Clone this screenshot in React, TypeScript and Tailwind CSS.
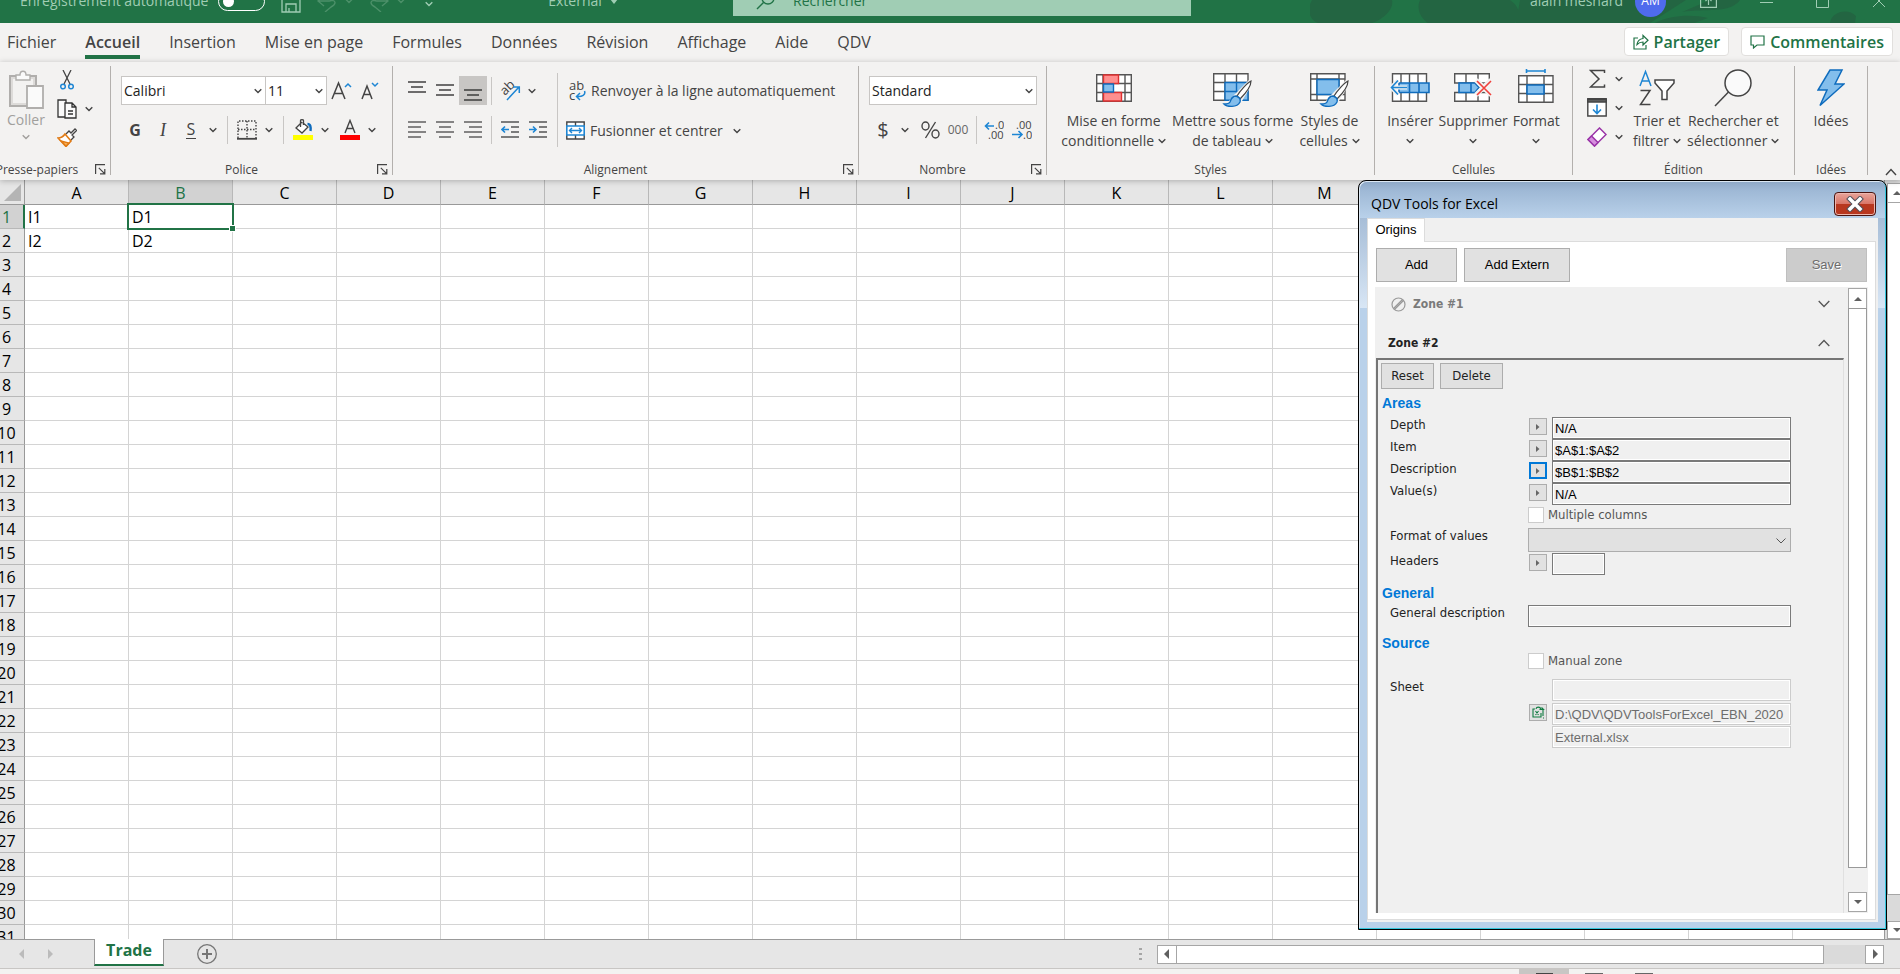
import React, { useState } from "react";
import clsx from "clsx";

const columns = "ABCDEFGHIJKLMNOPQR".split("");
const rows = Array.from({ length: 31 }, (_, i) => i + 1);
const cells: Record<string, string> = { A1: "I1", B1: "D1", A2: "I2", B2: "D2" };

const tabs = [
  "Fichier",
  "Accueil",
  "Insertion",
  "Mise en page",
  "Formules",
  "Données",
  "Révision",
  "Affichage",
  "Aide",
  "QDV",
];

/* ---------- small pieces ---------- */

const Chevron = ({ className = "" }: { className?: string }) => (
  <svg
    width="8"
    height="6"
    viewBox="0 0 8 6"
    fill="none"
    stroke="currentColor"
    strokeWidth="1.4"
    className={clsx("inline-block shrink-0", className)}
  >
    <path d="M0.7 1.2 4 4.5 7.3 1.2" />
  </svg>
);

const Drop = ({ label }: { label: string }) => (
  <button aria-label={label} className="flex h-7 w-4 items-center justify-center">
    <Chevron />
  </button>
);

const Tool = ({
  label,
  active,
  children,
}: {
  label: string;
  active?: boolean;
  children: React.ReactNode;
}) => (
  <button
    aria-label={label}
    className={clsx("flex h-[29px] w-7 shrink-0 items-center justify-center", active && "bg-[#c8c6c4]")}
  >
    {children}
  </button>
);

const Sep = () => <div className="mr-[5px] ml-[6px] h-7 w-px shrink-0 bg-[#c8c6c4]" />;

const Lines = ({ rows, dark }: { rows: number[][]; dark?: boolean }) => (
  <svg width="18" height="20" viewBox="0 0 18 20" stroke={dark ? "#333" : "#555"} strokeWidth="1.4">
    {rows.map(([x1, x2, y]) => (
      <path key={y} d={`M${x1} ${y}H${x2}`} />
    ))}
  </svg>
);

const Group = ({
  name,
  launcher,
  className,
  children,
}: {
  name: string;
  launcher?: boolean;
  className: string;
  children: React.ReactNode;
}) => (
  <section className={clsx("flex h-[109px] shrink-0 flex-col border-r border-[#b3b0ad]", className)}>
    <div className="flex flex-1">{children}</div>
    <div className="flex h-[18px] items-end">
      <h3 className="flex-1 text-center text-xs leading-[10px] whitespace-nowrap">{name}</h3>
      {launcher && (
        <button aria-label={`Options ${name}`} className="mr-1 flex w-4 justify-end">
          <svg width="11" height="11" viewBox="0 0 11 11" fill="none" stroke="#444" strokeWidth="1.2">
            <path d="M10 .6H.6V10M3.8 3.8 9.6 9.6M9.8 5v4.8H5" />
          </svg>
        </button>
      )}
    </div>
  </section>
);

const Combo = ({ label, value, className }: { label: string; value: string; className: string }) => (
  <div className={clsx("relative h-[29px] shrink-0", className)}>
    <select
      aria-label={label}
      className="h-full w-full appearance-none border border-[#c8c6c4] bg-white pl-[2px] text-sm text-[#222]"
    >
      <option>{value}</option>
    </select>
    <Chevron className="pointer-events-none absolute top-3 right-1" />
  </div>
);

const BigButton = ({
  icon,
  lines,
  className,
}: {
  icon: React.ReactNode;
  lines: string[];
  className?: string;
}) => (
  <button className={clsx("flex shrink-0 flex-col items-center text-sm leading-[20px] whitespace-nowrap", className)}>
    <span className="flex h-[45px] items-center pb-[2px]">{icon}</span>
    <span>{lines[0]}</span>
    {lines.length > 1 && (
      <span className="flex h-5 items-center gap-1">
        {lines[1]}
        <Chevron className={lines[1] ? "" : "mb-px"} />
      </span>
    )}
  </button>
);

/* ---------- title bar ---------- */

const TitleBar = () => {
  const [autosave, setAutosave] = useState(false);
  return (
    <header className="relative h-[23px] shrink-0 overflow-hidden bg-[#217346] text-[#a0cdb4]">
      <svg className="absolute top-0 right-0" width="590" height="23" fill="#236542">
        <path d="M2 0C-4 10 0 20 8 23H62C76 18 84 8 82 0ZM110 0C104 14 118 23 118 23H205C214 14 206 4 200 0ZM206 23H340L376 0H210ZM345 23C360 15 382 14 398 18L384 23ZM520 23C522 11 538 8 546 16L545 23ZM400 0 372 12C395 8 420 14 430 0Z" />
      </svg>
      <div className="relative -mt-[21px] flex h-11 items-center text-sm whitespace-nowrap">
        <label className="flex w-[265px] items-center justify-between pl-5">
          Enregistrement automatique
          <input
            type="checkbox"
            checked={autosave}
            onChange={() => setAutosave(!autosave)}
            className="peer sr-only"
          />
          <span className="flex h-[19px] w-[47px] items-center rounded-full border border-white px-1">
            <span className="h-[11px] w-[11px] rounded-full bg-white" />
          </span>
        </label>
        <div className="flex w-[468px] items-center pl-4">
          <button aria-label="Enregistrer">
            <svg width="20" height="24" viewBox="0 0 20 24" fill="none" stroke="currentColor" strokeWidth="1.3">
              <path d="M1 3H16L19 6V23H1ZM5 23V15H15V23M5 3V9H14V3M8 23V19" />
            </svg>
          </button>
          <button aria-label="Annuler" className="ml-4 flex items-center gap-1 text-[#4c9069]">
            <svg width="20" height="22" viewBox="0 0 20 22" fill="none" stroke="currentColor" strokeWidth="1.4">
              <path d="M7 5 1 11 7 16M1 11H12C19 9 20 14 14 17L8 22" />
            </svg>
            <Chevron className="ml-1" />
          </button>
          <button aria-label="Rétablir" className="ml-4 flex items-center gap-1 text-[#4c9069]">
            <svg width="20" height="22" viewBox="0 0 20 22" fill="none" stroke="currentColor" strokeWidth="1.4">
              <path d="M13 5 19 11 13 16M19 11H8C1 9 0 14 6 17L12 22" />
            </svg>
            <Chevron className="ml-1" />
          </button>
          <button aria-label="Personnaliser" className="ml-5 pt-1">
            <Chevron />
          </button>
          <button className="mx-auto flex items-center gap-2">
            External
            <svg width="8" height="5" fill="currentColor">
              <path d="M0 0H8L4 5Z" />
            </svg>
          </button>
        </div>
        <label className="flex h-[30px] w-[458px] shrink-0 items-center gap-[17px] bg-[#a0cdb4] pl-[23px] text-[#217346]">
          <svg width="20" height="20" viewBox="0 0 20 20" fill="none" stroke="currentColor" strokeWidth="1.4">
            <circle cx="12" cy="7" r="6" />
            <path d="M7.500 11.500 1 18" />
          </svg>
          <input
            type="search"
            aria-label="Rechercher"
            placeholder="Rechercher"
            className="w-80 bg-transparent outline-none placeholder:text-[#217346]"
          />
        </label>
        <div className="flex flex-1 items-center justify-end">
          <span>alain mesnard</span>
          <span className="ml-3 flex h-[31px] w-[31px] items-center justify-center rounded-full bg-[#4f6bed] text-xs text-white">
            AM
          </span>
          <button aria-label="Options du ruban" className="ml-[34px]">
            <svg width="17" height="14" viewBox="0 0 17 14" fill="none" stroke="currentColor" strokeWidth="1.2">
              <path d="M.6.6H16.400V13.400H.6ZM8.500 11V4M5.500 7 8.500 4 11.500 7" />
            </svg>
          </button>
          <button aria-label="Réduire" className="ml-[43px]">
            <svg width="13" height="14" stroke="currentColor">
              <path d="M0 8.500H13" />
            </svg>
          </button>
          <button aria-label="Agrandir" className="ml-[43px]">
            <svg width="13" height="14" fill="none" stroke="currentColor">
              <path d="M.5.5H12.500V13.500H.5Z" />
            </svg>
          </button>
          <button aria-label="Fermer" className="mr-[14px] ml-[43px]">
            <svg width="14" height="14" stroke="currentColor">
              <path d="M1 1 13 13M13 1 1 13" />
            </svg>
          </button>
        </div>
      </div>
    </header>
  );
};

/* ---------- ribbon ---------- */

const TabRow = () => (
  <nav className="flex h-[39px] shrink-0 items-start justify-between pt-1 pr-[7px] pl-[7px]">
    <div className="flex gap-[29px]">
      {tabs.map((tab) => (
        <button
          key={tab}
          className={clsx(
            "flex h-8 items-center border-b-4 pt-px text-base whitespace-nowrap",
            tab === "Accueil" ? "border-[#217346] font-semibold" : "border-transparent"
          )}
        >
          {tab}
        </button>
      ))}
    </div>
    <div className="flex gap-3 font-semibold text-[#217346]">
      <button className="flex h-[29px] items-center gap-[5px] rounded-sm border border-[#e1dfdd] bg-white px-2">
        <svg width="16" height="16" viewBox="0 0 16 16" fill="none" stroke="currentColor" strokeWidth="1.2">
          <path d="M5 4H1V15H13V11M10 1.500V4.500C6 5 4.500 7 4 10.500C6 8.500 8 8 10 8V11L15 6.200Z" />
        </svg>
        Partager
      </button>
      <button className="flex h-[29px] items-center gap-[5px] rounded-sm border border-[#e1dfdd] bg-white px-2">
        <svg width="15" height="14" viewBox="0 0 15 14" fill="none" stroke="currentColor" strokeWidth="1.2">
          <path d="M1 1H14V10H7L3.500 13V10H1Z" />
        </svg>
        Commentaires
      </button>
    </div>
  </nav>
);

const Brush = () => (
  <>
    <path d="M38 9C34 11 27 19 24 24L27 27C32 22 38 14 38 9Z" fill="#fff" stroke="#444" strokeWidth="1.200" />
    <path d="M23 24C19 24 18 27 17 30C16 32 13 32 11 32C14 35 24 36 27 30C28 27 26 25 23 24Z" fill="#83beec" stroke="#0f6cbd" strokeWidth="1.400" />
  </>
);

const Ribbon = () => (
  <div className="z-10 flex h-[118px] shrink-0 overflow-hidden bg-[#f3f2f1] pt-1 text-[#444] shadow-[0_1px_6px_rgba(0,0,0,0.25)]">
    <Group name="Presse-papiers" launcher className="-ml-4 w-[127px]">
      <div className="flex w-[60px] flex-col items-center pt-1 pl-6 text-sm leading-[20px] text-[#a19f9d]">
        <button className="flex flex-col items-center">
          <svg width="36" height="40" viewBox="0 0 36 40" fill="#fafafa" stroke="#b0aeac" strokeWidth="1.400">
            <path d="M2 6H28V36H2Z" fill="#dddbd9" strokeWidth="2" />
            <path d="M5 9H25V33H5Z" stroke="none" fill="#f3f2f1" />
            <path d="M8 10V5H12C12 0 18 0 18 5H22V10Z" />
            <path d="M19 16H35V38H19Z" strokeWidth="1.800" />
          </svg>
          <span>Coller</span>
          <Chevron className="mt-1" />
        </button>
      </div>
      <div className="flex flex-col gap-[9px] pt-1 pl-[13px]">
        <button aria-label="Couper" className="pl-[3px]">
          <svg width="14" height="20" viewBox="0 0 14 20" fill="none" stroke="#444" strokeWidth="1.300">
            <path d="M3 0 10 14M11 0 4 14" />
            <circle cx="3" cy="16.500" r="2.300" stroke="#1e86d4" strokeWidth="1.500" />
            <circle cx="11" cy="16.500" r="2.300" stroke="#1e86d4" strokeWidth="1.500" />
          </svg>
        </button>
        <div className="flex h-5 items-center gap-1">
          <button aria-label="Copier">
            <svg width="20" height="20" viewBox="0 0 20 20" fill="#fafafa" stroke="#333" strokeWidth="1.300">
              <path d="M8 18H1V1H9V4" />
              <path d="M8 4H15L19 8V19H8ZM15 4V8H19M11 12H16M11 15H16" />
            </svg>
          </button>
          <Drop label="Options de copie" />
        </div>
        <button aria-label="Reproduire la mise en forme" className="w-5">
          <svg width="20" height="19" viewBox="0 0 20 19" fill="none" stroke="#444" strokeWidth="1.300">
            <path d="M9 6 12 3 14 5 18 1 19.500 2.500 15 7 17 9 14 12" fill="#fff" />
            <path d="M8 6 14 13 9 18.500 1 10C4 10 6 9 8 6Z" fill="#fff" stroke="#e07b16" strokeWidth="1.600" />
            <path d="M4 13 12 15 9 18Z" fill="#f9b35a" stroke="#e07b16" />
          </svg>
        </button>
      </div>
    </Group>

    <Group name="Police" launcher className="w-[282px]">
      <div className="flex flex-col gap-[10px] pt-[10px] pl-[10px]">
        <div className="flex">
          <Combo label="Police" value="Calibri" className="w-[145px]" />
          <Combo label="Taille" value="11" className="-ml-px w-[62px]" />
          <div className="flex">
            <Tool label="Augmenter la taille">
              <svg width="22" height="20" viewBox="0 0 22 20" fill="none" stroke="#444" strokeWidth="1.500">
                <path d="M2 18 8.500 2 15 18M4.500 12.500H12.500" />
                <path d="M15 6 18 3 21 6" stroke="#1e86d4" />
              </svg>
            </Tool>
            <Tool label="Réduire la taille">
              <svg width="20" height="20" viewBox="0 0 20 20" fill="none" stroke="#444" strokeWidth="1.500">
                <path d="M3 18 8 5 13 18M5 13.500H11" />
                <path d="M13 2 16 5 19 2" stroke="#1e86d4" />
              </svg>
            </Tool>
          </div>
        </div>
        <div className="flex items-center">
          <Tool label="Gras">
            <b className="text-base">G</b>
          </Tool>
          <Tool label="Italique">
            <i className="font-['Liberation_Serif'] text-lg">I</i>
          </Tool>
          <Tool label="Souligné">
            <span className="border-b border-[#444] px-px text-base leading-[17px]">S</span>
          </Tool>
          <Drop label="Options de soulignement" />
          <Sep />
          <Tool label="Bordures">
            <svg width="20" height="20" viewBox="0 0 20 20" fill="none" stroke="#444" strokeWidth="1.400">
              <path d="M1 18V1H19V18M10 1V18M1 9.500H19" strokeDasharray="1.500 1.500" />
              <path d="M0 18.800H20" strokeWidth="1.800" />
            </svg>
          </Tool>
          <Drop label="Options de bordure" />
          <Sep />
          <Tool label="Couleur de remplissage">
            <svg width="20" height="21" viewBox="0 0 20 21" fill="none" stroke="#444" strokeWidth="1.300">
              <path d="M9 3 3 9 9 14 15 8 9.500 3.500M7.500 8V1.500C7.500 .5 10.500 .5 10.500 1.500V6" fill="#fff" />
              <path d="M14.500 5C17.500 5 18 8 17.500 12" stroke="#0f6cbd" strokeWidth="2.400" />
              <path d="M0 16H20V21H0Z" fill="#ff0" stroke="none" />
            </svg>
          </Tool>
          <Drop label="Options de remplissage" />
          <div className="w-[3px]" />
          <Tool label="Couleur de police">
            <svg width="20" height="21" viewBox="0 0 20 21" fill="none" stroke="#444" strokeWidth="1.400">
              <path d="M5 14 10 1.500 15 14M6.800 9.500H13.200" />
              <path d="M0 16H20V21H0Z" fill="#f00" stroke="none" />
            </svg>
          </Tool>
          <Drop label="Options de couleur" />
        </div>
      </div>
    </Group>

    <Group name="Alignement" launcher className="w-[466px]">
      <div className="flex flex-col gap-[10px] pt-[10px] pl-[10px]">
        <div className="flex items-center">
          <Tool label="Aligner en haut">
            <Lines dark rows={[[0, 18, 1], [3, 15, 6], [0, 18, 11]]} />
          </Tool>
          <Tool label="Centrer verticalement">
            <Lines dark rows={[[0, 18, 4], [3, 15, 9], [0, 18, 14]]} />
          </Tool>
          <Tool label="Aligner en bas" active>
            <Lines dark rows={[[0, 18, 9], [3, 15, 14], [0, 18, 19]]} />
          </Tool>
          <div className="mr-1 ml-1 h-7 w-px bg-[#c8c6c4]" />
          <Tool label="Orientation">
            <svg width="21" height="20" viewBox="0 0 21 20" fill="none">
              <text x="0" y="0" transform="translate(5 15) rotate(-45)" fontSize="13" fill="#444">
                ab
              </text>
              <path d="M7 19 19 6M13 6H19.300V12" stroke="#1e86d4" strokeWidth="1.500" />
            </svg>
          </Tool>
          <Drop label="Options d'orientation" />
        </div>
        <div className="flex items-center">
          <Tool label="Aligner à gauche">
            <Lines rows={[[0, 18, 2], [0, 13, 7], [0, 18, 12], [0, 13, 17]]} />
          </Tool>
          <Tool label="Centrer">
            <Lines rows={[[0, 18, 2], [3, 15, 7], [0, 18, 12], [3, 15, 17]]} />
          </Tool>
          <Tool label="Aligner à droite">
            <Lines rows={[[0, 18, 2], [5, 18, 7], [0, 18, 12], [5, 18, 17]]} />
          </Tool>
          <div className="mr-1 ml-1 h-7 w-px bg-[#c8c6c4]" />
          <Tool label="Diminuer le retrait">
            <svg width="18" height="20" viewBox="0 0 18 20" fill="none" stroke="#555" strokeWidth="1.400">
              <path d="M0 2H18M10 7H18M10 12H18M0 17H18" />
              <path d="M8 9.500H1M4 6.500 1 9.500 4 12.500" stroke="#1e86d4" strokeWidth="1.600" />
            </svg>
          </Tool>
          <Tool label="Augmenter le retrait">
            <svg width="18" height="20" viewBox="0 0 18 20" fill="none" stroke="#555" strokeWidth="1.400">
              <path d="M0 2H18M10 7H18M10 12H18M0 17H18" />
              <path d="M0 9.500H7M4 6.500 7 9.500 4 12.500" stroke="#1e86d4" strokeWidth="1.600" />
            </svg>
          </Tool>
        </div>
      </div>
      <div className="mt-[7px] ml-[5px] h-[74px] w-px bg-[#c8c6c4]" />
      <div className="flex flex-col gap-[11px] pt-[10px] pl-2 text-sm whitespace-nowrap">
        <button className="flex h-[29px] items-center gap-[5px]">
          <svg width="20" height="20" viewBox="0 0 20 20" fill="none">
            <text x="3" y="9" fontSize="13" fill="#444">
              ab
            </text>
            <text x="3" y="19" fontSize="13" fill="#444">
              c
            </text>
            <path d="M18.500 10C20 14 16 16 11 15.500M14 12 10.500 15.500 14 19" stroke="#1e86d4" strokeWidth="1.500" />
          </svg>
          Renvoyer à la ligne automatiquement
        </button>
        <div className="flex items-center">
          <button className="flex h-[29px] items-center gap-[5px]">
            <svg width="19" height="19" viewBox="0 0 19 19" fill="none" stroke="#444" strokeWidth="1.400">
              <path d="M.8 1H18.200V18H.8ZM9.500 1V5M9.500 14V18" fill="#fff" />
              <path d="M.8 5H18.200V14H.8Z" fill="#fff" stroke="#1e86d4" strokeWidth="1.600" />
              <path d="M3.500 9.500H15.500M6 7 3.500 9.500 6 12M13 7 15.500 9.500 13 12" stroke="#1e86d4" />
            </svg>
            Fusionner et centrer
          </button>
          <div className="w-[6px]" />
          <Drop label="Options de fusion" />
        </div>
      </div>
    </Group>

    <Group name="Nombre" launcher className="w-[188px]">
      <div className="flex flex-col gap-[10px] pt-[10px] pl-[10px]">
        <Combo label="Format de nombre" value="Standard" className="w-[168px]" />
        <div className="flex items-center">
          <Tool label="Format monétaire">
            <span className="text-xl">$</span>
          </Tool>
          <Drop label="Devises" />
          <div className="w-[3px]" />
          <Tool label="Pourcentage">
            <svg width="19" height="18" viewBox="0 0 19 18" fill="none" stroke="#444" strokeWidth="1.400">
              <ellipse cx="4.500" cy="5" rx="3.500" ry="4" />
              <ellipse cx="14.500" cy="13" rx="3.500" ry="4" />
              <path d="M14.500 1 4.500 17" />
            </svg>
          </Tool>
          <Tool label="Milliers">
            <span className="text-xs text-[#666]">000</span>
          </Tool>
          <div className="mr-[3px] ml-[4px] h-7 w-px bg-[#c8c6c4]" />
          <Tool label="Ajouter une décimale">
            <svg width="20" height="20" viewBox="0 0 20 20" fontSize="11" fill="#444">
              <text x="11" y="9">.0</text>
              <text x="4" y="19">.00</text>
              <path d="M10 6H1.500M5 2.500 1.500 6 5 9.500" fill="none" stroke="#1e86d4" strokeWidth="1.600" />
            </svg>
          </Tool>
          <Tool label="Réduire les décimales">
            <svg width="20" height="20" viewBox="0 0 20 20" fontSize="11" fill="#444">
              <text x="4" y="9">.00</text>
              <text x="11" y="19">.0</text>
              <path d="M0 14.500H9.500M6.500 11 10 14.500 6.500 18" fill="none" stroke="#1e86d4" strokeWidth="1.600" />
            </svg>
          </Tool>
        </div>
      </div>
    </Group>

    <Group name="Styles" className="w-[328px]">
      <div className="flex w-full justify-center gap-[6px]">
        <BigButton
          lines={["Mise en forme", "conditionnelle"]}
          icon={
            <svg width="36" height="28" viewBox="0 0 36 28" fill="#fff" stroke="#555" strokeWidth="1.400">
              <path d="M.7.7H35.300V27.300H.7ZM.7 9.500H35.300M.7 18.500H35.300M7 .7V27.300M29 .7V27.300" />
              <path d="M7.500 1H22.500V9.500H7.500ZM7.500 18.500H25.500V27H7.500Z" fill="#ff8f8f" stroke="#e03131" />
              <path d="M7.500 10H17.500V18H7.500Z" fill="#83beec" stroke="#0f6cbd" />
            </svg>
          }
        />
        <BigButton
          lines={["Mettre sous forme", "de tableau"]}
          icon={
            <svg width="39" height="36" viewBox="0 0 39 36" className="mt-1">
              <path d="M.7 1.700H35V28.300H.7ZM.7 10.500H35M.7 19.500H35M12 1.700V28.300M23.500 1.700V28.300" fill="#fff" stroke="#555" strokeWidth="1.400" />
              <path d="M12 10.500H35V28.300H12ZM12 19.500H35M23.500 10.500V28.300" fill="#83beec" stroke="#0f6cbd" strokeWidth="1.400" />
              <path d="M38 6 20 24 12 34H26L38 14Z" fill="#f3f2f1" />
              <Brush />
            </svg>
          }
        />
        <BigButton
          lines={["Styles de", "cellules"]}
          icon={
            <svg width="39" height="36" viewBox="0 0 39 36" className="mt-1">
              <path d="M.7 1.700H35V28.300H.7ZM.7 7H35M.7 22.500H35M7 1.700V28.300M29 1.700V28.300" fill="#fff" stroke="#555" strokeWidth="1.400" />
              <path d="M7 7.500H29V22.500H7Z" fill="#83beec" stroke="#0f6cbd" strokeWidth="1.400" />
              <path d="M38 6 20 24 12 34H26L38 14Z" fill="#f3f2f1" />
              <Brush />
            </svg>
          }
        />
      </div>
    </Group>

    <Group name="Cellules" className="w-[198px]">
      <div className="flex w-full justify-center gap-[5px]">
        <BigButton
          lines={["Insérer", ""]}
          icon={
            <svg width="40" height="30" viewBox="0 0 40 30" fill="#fff" stroke="#555" strokeWidth="1.400">
              <path d="M2.500.7H36.500V28.300H2.500ZM11 .7V28.300M19.500 .7V28.300M28 .7V28.300" />
              <path d="M9 10H39V19.500H9ZM19.500 10V19.500M29 10V19.500" fill="#83beec" stroke="#0f6cbd" strokeWidth="1.600" />
              <path d="M17 14.500H1M8 7.500 1 14.500 8 21.500" fill="none" stroke="#f3f2f1" strokeWidth="4" />
              <path d="M17 14.500H1.500M8 7.500 1.500 14.500 8 21.500" fill="none" stroke="#1e86d4" strokeWidth="1.600" />
            </svg>
          }
        />
        <BigButton
          lines={["Supprimer", ""]}
          icon={
            <svg width="38" height="30" viewBox="0 0 38 30" fill="#fff" stroke="#555" strokeWidth="1.400">
              <path d="M.7.7H35.300V10H.7ZM.7 19.500H35.300V28.300H.7ZM12 .7V10M24 .7V10M12 19.500V28.300M24 19.500V28.300" />
              <path d="M5 10H21L25 14.500 21 19.500H5ZM17 10V19.500" fill="#83beec" stroke="#0f6cbd" strokeWidth="1.600" />
              <path d="M22 7 37 22M37 7 22 22" stroke="#f3f2f1" strokeWidth="5" />
              <path d="M23 8 37 22M37 8 23 22" stroke="#f0413c" strokeWidth="1.600" />
            </svg>
          }
        />
        <BigButton
          lines={["Format", ""]}
          icon={
            <svg width="36" height="36" viewBox="0 0 36 36" fill="#fff" stroke="#555" strokeWidth="1.400" className="-mt-1">
              <path d="M.7 7.700H35V34.300H.7ZM.7 16.500H35M.7 25.500H35M9 7.700V34.300M26 7.700V34.300" />
              <path d="M9 17H26V26H9Z" fill="#83beec" stroke="#0f6cbd" strokeWidth="1.600" />
              <path d="M8.500 3H27M8.500 1V5M27 1V5" stroke="#1e86d4" strokeWidth="1.600" />
            </svg>
          }
        />
      </div>
    </Group>

    <Group name="Édition" className="w-[222px]">
      <div className="-mt-[2px] flex flex-col pl-[10px]">
        <div className="flex h-[29px] items-center">
          <Tool label="Somme automatique">
            <svg width="17" height="20" viewBox="0 0 17 20" fill="none" stroke="#444" strokeWidth="1.500">
              <path d="M15.500 4V1.500H1.500L10 10 1.500 18H15.500V15.500" />
            </svg>
          </Tool>
          <Drop label="Options de somme" />
        </div>
        <div className="flex h-[29px] items-center">
          <Tool label="Recopier">
            <svg width="20" height="19" viewBox="0 0 20 19" fill="#fff" stroke="#444" strokeWidth="1.400">
              <path d="M.8.8H19.200V18H.8Z" />
              <path d="M.8 1.500H19.200V4H.8Z" fill="#666" />
              <path d="M10 6.500V15.500M6 11.500 10 15.500 14 11.500" fill="none" stroke="#1e86d4" strokeWidth="1.600" />
            </svg>
          </Tool>
          <Drop label="Options de recopie" />
        </div>
        <div className="flex h-[29px] items-center">
          <Tool label="Effacer">
            <svg width="20" height="20" viewBox="0 0 20 20" fill="#fff" stroke="#9a34a8" strokeWidth="1.500">
              <path d="M12.500 1 19 7.500 7.500 19 1 12.500Z" />
              <path d="M4.500 9 11 15.500 7.500 19 1 12.500Z" fill="#d68fdf" />
            </svg>
          </Tool>
          <Drop label="Options d'effacement" />
        </div>
      </div>
      <BigButton
        className="ml-[6px]"
        lines={["Trier et", "filtrer"]}
        icon={
          <svg width="36" height="38" viewBox="0 0 36 38" fill="none" stroke="#444" strokeWidth="1.500">
            <path d="M1 17 6.500 2.500 12 17M3 12H10" stroke="#1e86d4" />
            <path d="M1.500 21.500H11L1.500 35.500H11.500" />
            <path d="M16 11H35V14L28 22V30.500H23V22L16 14Z" fill="#fff" />
          </svg>
        }
      />
      <BigButton
        className="ml-[6px]"
        lines={["Rechercher et", "sélectionner"]}
        icon={
          <svg width="38" height="38" viewBox="0 0 38 38" fill="#fafafa" stroke="#444" strokeWidth="1.500">
            <circle cx="24" cy="14" r="13" />
            <path d="M14.500 23 1 37" />
          </svg>
        }
      />
    </Group>

    <Group name="Idées" className="w-[73px]">
      <BigButton
        className="mx-auto"
        lines={["Idées"]}
        icon={
          <svg width="28" height="38" viewBox="0 0 28 38" fill="#83beec" stroke="#0f6cbd" strokeWidth="1.500">
            <path d="M13 1H25L18 15H27L3 36.500 10 21H1Z" />
          </svg>
        }
      />
    </Group>
    <button aria-label="Réduire le ruban" className="mr-[3px] mb-1 ml-auto self-end">
      <svg width="12" height="8" viewBox="0 0 12 8" fill="none" stroke="#444" strokeWidth="1.400">
        <path d="M1 7 6 1.500 11 7" />
      </svg>
    </button>
  </div>
);

/* ---------- sheet ---------- */

const Sheet = () => (
  <div className="min-w-0 flex-1 overflow-hidden border-r border-[#999]">
    <table className="-ml-[9px] w-[1906px] table-fixed border-separate border-spacing-0 text-base leading-[20px] text-black">
      <colgroup>
        <col className="w-[34px]" />
        {columns.map((c) => (
          <col key={c} className="w-[104px]" />
        ))}
      </colgroup>
      <thead>
        <tr className="h-[25px]">
          <th className="border-r border-b border-[#999] bg-[#e6e6e6] p-0">
            <svg width="17" height="17" className="ml-[13px]" fill="#b4b4b4">
              <path d="M17 0V17H0Z" />
            </svg>
          </th>
          {columns.map((c) => (
            <th
              key={c}
              className={clsx(
                "border-r border-b border-[#999] border-r-[#b8b8b8] px-0 pt-[2px] pb-0 font-normal",
                c === "B" ? "bg-[#d2d2d2] text-[#217346]" : "bg-[#e6e6e6]"
              )}
            >
              {c}
            </th>
          ))}
        </tr>
      </thead>
      <tbody>
        {rows.map((r) => (
          <tr key={r} className="h-6">
            <th
              className={clsx(
                "border-b border-b-[#b8b8b8] py-0 pl-[3px] font-normal",
                r === 1
                  ? "border-r-2 border-r-[#217346] bg-[#d2d2d2] pr-1 text-[#217346]"
                  : "border-r border-r-[#999] bg-[#e6e6e6] pr-[5px]"
              )}
            >
              {r}
            </th>
            {columns.map((c) => {
              const id = c + r;
              return (
                <td key={id} className="relative border-r border-b border-[#d4d4d4] py-0 pl-[3px]">
                  {cells[id]}
                  {id === "B1" && (
                    <span className="absolute -inset-[2px] z-10 border-2 border-[#217346]">
                      <span className="absolute -right-1 -bottom-1 h-[7px] w-[7px] border border-white bg-[#217346]" />
                    </span>
                  )}
                </td>
              );
            })}
          </tr>
        ))}
      </tbody>
    </table>
  </div>
);

const Arrow = ({ d, label, className }: { d: string; label: string; className?: string }) => (
  <button
    aria-label={label}
    className={clsx("flex shrink-0 items-center justify-center border border-[#a6a6a6] bg-white", className)}
  >
    <svg width="10" height="10" fill="#606060">
      <path d={d} />
    </svg>
  </button>
);

const UP = "M1 7 5 3 9 7Z";
const DOWN = "M1 3 5 7 9 3Z";
const LEFT = "M7 0 2 5 7 10Z";
const RIGHT = "M3 0 8 5 3 10Z";

const BottomBar = () => (
  <footer className="shrink-0">
    <div className="flex h-[30px] items-center border-t border-b border-[#999] border-b-[#c8c6c4] bg-[#e6e6e6]">
      <button aria-label="Feuille précédente" className="ml-[17px]">
        <svg width="10" height="10" fill="#bbb">
          <path d={LEFT} />
        </svg>
      </button>
      <button aria-label="Feuille suivante" className="ml-[18px]">
        <svg width="10" height="10" fill="#bbb">
          <path d={RIGHT} />
        </svg>
      </button>
      <button className="-mt-[3px] ml-[39px] h-[27px] w-[70px] border-x border-b-2 border-[#999] border-b-[#217346] bg-white pb-1 text-base leading-[20px] font-bold text-[#217346]">
        Trade
      </button>
      <button aria-label="Nouvelle feuille" className="ml-[33px]">
        <svg width="20" height="20" viewBox="0 0 20 20" fill="none" stroke="#767676" strokeWidth="1.300">
          <circle cx="10" cy="10" r="9.300" />
          <path d="M10 5V15M5 10H15" strokeWidth="2" />
        </svg>
      </button>
      <div className="ml-auto flex flex-col gap-[3px] pr-[15px]">
        <span className="h-[2px] w-[3px] bg-[#a6a6a6]" />
        <span className="h-[2px] w-[3px] bg-[#a6a6a6]" />
        <span className="h-[2px] w-[3px] bg-[#a6a6a6]" />
      </div>
      <div className="mr-4 flex h-[19px] w-[727px] bg-[#dadada]">
        <Arrow d={LEFT} label="Défiler à gauche" className="w-5" />
        <div className="-ml-px w-[648px] border border-[#a6a6a6] bg-white" />
        <Arrow d={RIGHT} label="Défiler à droite" className="ml-auto w-[19px]" />
      </div>
    </div>
    <div className="flex h-[5px] items-end justify-end bg-[#f3f2f1] pr-[247px]">
      <span className="flex h-full w-[50px] items-end justify-center bg-[#c8c6c4]">
        <span className="h-px w-[17px] bg-[#444]" />
      </span>
      <span className="ml-4 h-px w-[18px] bg-[#666]" />
      <span className="ml-8 h-px w-[18px] bg-[#666]" />
    </div>
  </footer>
);

/* ---------- QDV dialog ---------- */

const PickButton = ({ label, focused }: { label: string; focused?: boolean }) => (
  <button
    aria-label={label}
    className={clsx(
      "mt-px mr-[5px] ml-px flex h-[17px] w-[18px] shrink-0 items-center justify-center bg-[#e1e1e1]",
      focused ? "border-2 border-[#0078d7]" : "border border-[#adadad]"
    )}
  >
    <svg width="4" height="6" fill="#666">
      <path d="M0 0 3.500 3 0 6Z" />
    </svg>
  </button>
);

const Field = ({
  id,
  label,
  value = "",
  disabled,
  className = "w-[239px]",
}: {
  id: string;
  label?: string;
  value?: string;
  disabled?: boolean;
  className?: string;
}) => (
  <input
    id={id}
    aria-label={label}
    defaultValue={value}
    disabled={disabled}
    className={clsx(
      "h-[22px] shrink-0 border bg-[#f0f0f0] px-[2px] font-['Liberation_Sans',Arial,sans-serif] text-[13px] shadow-[inset_0_0_0_1px_#fff] outline-none",
      disabled ? "border-[#ccc] text-[#6d6d6d]" : "border-[#7a7a7a] text-black",
      className
    )}
  />
);

const Row = ({
  label,
  id,
  className,
  children,
}: {
  label?: string;
  id?: string;
  className?: string;
  children: React.ReactNode;
}) => (
  <div className={clsx("flex h-[22px] items-start pl-3", className)}>
    {label ? (
      <label htmlFor={id} className="w-[138px] shrink-0 leading-[16px]">
        {label}
      </label>
    ) : (
      <div className="w-[138px] shrink-0" />
    )}
    {children}
  </div>
);

const Heading = ({ children, className }: { children: string; className: string }) => (
  <h4
    className={clsx(
      "pl-1 font-['Liberation_Sans',Arial,sans-serif] text-sm leading-[20px] font-bold text-[#0078d7]",
      className
    )}
  >
    {children}
  </h4>
);

const Check = ({ label }: { label: string }) => (
  <label className="flex h-4 items-center gap-1 text-[#555]">
    <input type="checkbox" className="h-4 w-4 appearance-none border border-[#ccc] bg-white" />
    {label}
  </label>
);

const ranges = [
  { id: "depth", label: "Depth", value: "N/A" },
  { id: "item", label: "Item", value: "$A$1:$A$2" },
  { id: "description", label: "Description", value: "$B$1:$B$2", focused: true },
  { id: "values", label: "Value(s)", value: "N/A" },
];

const winButton =
  "flex h-[34px] items-center justify-center border border-[#adadad] bg-[#e1e1e1] text-[13px] text-black";

const QdvDialog = () => (
  <div
    role="dialog"
    aria-label="QDV Tools for Excel"
    className="absolute top-[180px] right-[13px] z-20 flex h-[750px] w-[529px] flex-col rounded-t-lg border border-black bg-gradient-to-b from-[#93adcb] via-[#d8e6f5] via-[17%] to-[#b9d1ea] to-[17%] px-2 pb-[7px] shadow-[inset_-1px_-1px_0_#34c6dc,inset_1px_1px_0_#dbe7f3]"
  >
    <div className="-mx-[7px] mt-px flex h-9 shrink-0 items-center justify-between rounded-t-lg bg-gradient-to-b from-[#8fa9c8] via-[#9fb9d6] via-[25%] to-[#b9d1ea] pr-[9px] pl-[11px]">
      <h2 className="pt-2 text-sm text-black">QDV Tools for Excel</h2>
      <button
        aria-label="Close"
        className="mt-[7px] flex h-[24px] w-[42px] items-center justify-center rounded-sm border border-[#4a1410] bg-gradient-to-b from-[#e8a49a] via-[#d9776a] via-[48%] to-[#b8371f] to-[52%] shadow-[inset_0_0_0_1px_#eeb7ae]"
      >
        <svg width="18" height="16" viewBox="0 0 18 16" strokeLinecap="square">
          <path d="M4 3 14 13M14 3 4 13" stroke="#4f4f5a" strokeWidth="5.500" />
          <path d="M4 3 14 13M14 3 4 13" stroke="#fff" strokeWidth="3.500" />
        </svg>
      </button>
    </div>

    <div className="flex min-h-0 flex-1 flex-col bg-[#f0f0f0] pr-[2px] pb-[2px] font-['Liberation_Sans',Arial,sans-serif]">
      <button className="z-10 -mb-px h-6 w-[58px] self-start border border-b-0 border-[#dcdcdc] bg-white pb-[2px] text-[13px] text-black">
        Origins
      </button>
      <div className="flex min-h-0 flex-1 flex-col border border-[#dcdcdc] bg-white px-[7px] pt-[6px] pb-[6px]">
        <div className="mb-[5px] flex gap-[7px] px-px">
          <button className={clsx(winButton, "w-[81px]")}>Add</button>
          <button className={clsx(winButton, "w-[106px]")}>Add Extern</button>
          <button
            disabled
            className="ml-auto h-[34px] w-[81px] border border-[#bfbfbf] bg-[#ccc] text-[13px] text-[#6d6d6d] [text-shadow:1px_1px_0_#fff]"
          >
            Save
          </button>
        </div>

        <div className="flex min-h-0 flex-1 bg-[#f0f0f0] font-['DejaVu_Sans_Condensed','DejaVu_Sans',sans-serif] text-[13px] text-[#222]">
          <div className="flex min-w-0 flex-1 flex-col">
            <button className="flex h-[34px] items-center pr-4 pl-4 text-xs font-bold text-[#7a7a7a]">
              <svg width="15" height="15" viewBox="0 0 15 15" fill="none" stroke="#999" strokeWidth="1.200" className="mr-[7px]">
                <circle cx="7.500" cy="7.500" r="6.500" />
                <path d="M3.500 12.500 12.500 3.500M2.500 11.500 11.500 2.500" />
              </svg>
              Zone #1
              <svg width="12" height="8" viewBox="0 0 12 8" fill="none" stroke="#555" strokeWidth="1.300" className="ml-auto">
                <path d="M.7 1 6 6.500 11.300 1" />
              </svg>
            </button>
            <button className="mt-[6px] flex h-[31px] items-center pr-4 pl-[13px] text-xs font-bold text-[#222]">
              Zone #2
              <svg width="12" height="8" viewBox="0 0 12 8" fill="none" stroke="#555" strokeWidth="1.300" className="ml-auto">
                <path d="M.7 7 6 1.500 11.300 7" />
              </svg>
            </button>

            <div className="mr-[2px] ml-px min-h-0 flex-1 border-t-2 border-r border-l-2 border-[#757575] border-r-[#e0e0e0]">
              <div className="mt-[3px] ml-[3px] flex gap-[6px]">
                <button className="h-[26px] w-[53px] border border-[#adadad] bg-[#e1e1e1]">Reset</button>
                <button className="h-[26px] w-[63px] border border-[#adadad] bg-[#e1e1e1]">Delete</button>
              </div>

              <Heading className="mt-1 mb-1">Areas</Heading>
              {ranges.map((r) => (
                <Row key={r.id} id={r.id} label={r.label}>
                  <PickButton label={`Pick ${r.label}`} focused={r.focused} />
                  <Field id={r.id} value={r.value} />
                </Row>
              ))}
              <Row className="pt-[2px]">
                <Check label="Multiple columns" />
              </Row>
              <Row id="format" label="Format of values" className="my-px">
                <div className="relative">
                  <select
                    id="format"
                    className="block h-6 w-[263px] appearance-none border border-[#adadad] bg-[#e1e1e1]"
                  />
                  <svg width="10" height="6" viewBox="0 0 10 6" fill="none" stroke="#555" className="pointer-events-none absolute top-[10px] right-[5px]">
                    <path d="M.5.5 5 5 9.500.5" />
                  </svg>
                </div>
              </Row>
              <Row id="headers" label="Headers" className="mt-[3px]">
                <PickButton label="Pick headers" />
                <Field id="headers" className="w-[53px]" />
              </Row>

              <Heading className="mt-2 mb-[2px]">General</Heading>
              <Row id="general" label="General description">
                <Field id="general" className="w-[263px]" />
              </Row>

              <Heading className="mt-[6px]">Source</Heading>
              <Row className="mb-1">
                <Check label="Manual zone" />
              </Row>
              <Row id="sheet" label="Sheet">
                <div className="w-6 shrink-0" />
                <Field id="sheet" disabled />
              </Row>
              <Row className="mt-[2px]">
                <button
                  aria-label="Open workbook"
                  className="mt-px mr-[5px] ml-px flex h-[17px] w-[18px] shrink-0 items-center justify-center border border-[#adadad] bg-[#e1e1e1]"
                >
                  <svg width="13" height="13" viewBox="0 0 13 13" fill="none" stroke="#107c41" strokeWidth="1.100">
                    <path d="M3 3H1V11H9V7M3.500 5 6.500 9M6.500 5 3.500 9M4 3C4.500 .5 8 .5 9 3M11 3V10M7.500 3.500H11.500L9.500 1.500M11 12H12" />
                  </svg>
                </button>
                <Field id="path" label="Folder" disabled value="D:\QDV\QDVToolsForExcel_EBN_2020" />
              </Row>
              <Row className="mt-px">
                <div className="w-6 shrink-0" />
                <Field id="file" label="File" disabled value="External.xlsx" />
              </Row>
            </div>
          </div>

          <div className="mt-px mr-px mb-px ml-[2px] flex w-[19px] flex-col">
            <Arrow d={UP} label="Scroll up" className="h-[21px]" />
            <div className="-mt-px mb-6 flex-1 border border-[#999] bg-white" />
            <Arrow d={DOWN} label="Scroll down" className="h-5" />
          </div>
        </div>
      </div>
    </div>
  </div>
);

const App = () => {
  return (
    <div className="relative flex h-screen flex-col overflow-hidden bg-[#f3f2f1] font-['Open_Sans','Noto_Sans',sans-serif] text-[#444]">
      <TitleBar />
      <TabRow />
      <Ribbon />
      <main className="flex min-h-0 flex-1 bg-white">
        <Sheet />
        <div className="flex w-[15px] flex-col bg-[#dadada] pt-[3px] pl-[2px]">
          <Arrow d={UP} label="Défiler vers le haut" className="h-5 w-5" />
          <div className="-mt-px mb-[26px] w-5 flex-1 border border-[#a6a6a6] bg-white" />
          <Arrow d={DOWN} label="Défiler vers le bas" className="h-[18px] w-5" />
        </div>
      </main>
      <BottomBar />
      <QdvDialog />
    </div>
  );
};

export default App;
